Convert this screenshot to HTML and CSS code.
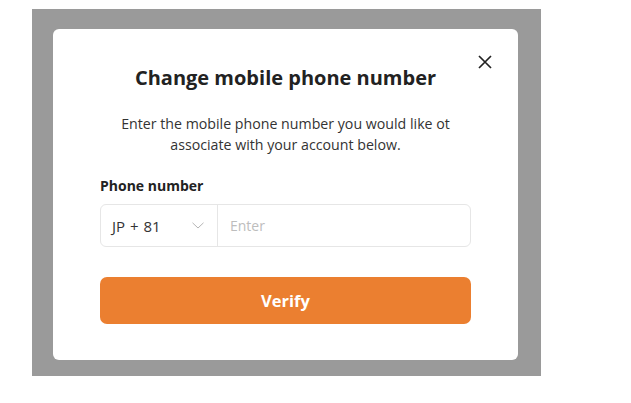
FILE: index.html
```html
<!DOCTYPE html>
<html lang="en">
<head>
    <meta charset="UTF-8">
    <meta name="viewport" content="width=device-width, initial-scale=1.0">
    <title>Change mobile phone number</title>
    <link rel="stylesheet" href="styles.css">
</head>
<body>
    <div class="backdrop">
        <div class="modal">
            <button class="close" aria-label="Close">
                <svg width="14" height="14" viewBox="0 0 14 14">
                    <path d="M1 1L13 13M13 1L1 13" stroke="#222" stroke-width="1.7" fill="none"/>
                </svg>
            </button>
            <h2 class="title">Change mobile phone number</h2>
            <p class="desc">Enter the mobile phone number you would like ot<br>associate with your account below.</p>

            <label class="label" for="phone">Phone number</label>
            <div class="phone-field">
                <div class="country">
                    <span>JP + 81</span>
                    <svg width="12" height="7" viewBox="0 0 12 7">
                        <path d="M0.5 0.8L6 6L11.5 0.8" stroke="#b5b5b5" stroke-width="1" fill="none"/>
                    </svg>
                </div>
                <input type="text" id="phone" placeholder="Enter">
            </div>

            <button class="btn">Verify</button>
        </div>
    </div>
</body>
</html>
```

FILE: styles.css
```css
body {
    margin: 0;
    background: #fff;
    font-family: "Open Sans", "Noto Sans", Arial, sans-serif;
    color: #222;
}
.backdrop {
    margin: 9px 0 0 32px;
    width: 509px;
    height: 367px;
    box-sizing: border-box;
    padding: 20px 23px 16px 21px;
    background: #9a9a9a;
}
.modal {
    position: relative;
    background: #fff;
    border-radius: 6px;
    height: 331px;
    box-sizing: border-box;
    padding: 35px 47px 0;
}
.close {
    position: absolute;
    top: 26px;
    right: 26px;
    padding: 0;
    border: none;
    background: none;
    width: 14px;
    height: 14px;
    cursor: pointer;
}
.close svg {
    display: block;
}
.title {
    margin: 0;
    font-size: 20px;
    line-height: 28px;
    font-weight: 700;
    text-align: center;
    color: #222;
}
.desc {
    margin: 21px 0 0;
    font-size: 14.2px;
    line-height: 21px;
    text-align: center;
    color: #333;
}
.label {
    display: block;
    margin-top: 21px;
    font-size: 14px;
    line-height: 20px;
    font-weight: 700;
    color: #222;
}
.phone-field {
    display: flex;
    margin-top: 8px;
    height: 43px;
    border: 1px solid #e6e6e6;
    border-radius: 6px;
    box-sizing: border-box;
}
.country {
    display: flex;
    align-items: center;
    justify-content: space-between;
    width: 117px;
    box-sizing: border-box;
    padding: 0 13px 0 11px;
    border-right: 1px solid #e6e6e6;
    font-size: 15px;
    color: #333;
}
.country span {
    word-spacing: 1px;
}
.phone-field input {
    flex: 1;
    border: none;
    outline: none;
    background: transparent;
    padding: 0 12px;
    font-family: inherit;
    font-size: 14px;
    color: #333;
}
.phone-field input::placeholder {
    color: #bdbdbd;
}
.btn {
    display: block;
    width: 100%;
    height: 47px;
    margin-top: 30px;
    border: none;
    border-radius: 7px;
    background: #eb7f30;
    color: #fff;
    font-family: inherit;
    font-size: 16.5px;
    font-weight: 700;
    cursor: pointer;
}
```
